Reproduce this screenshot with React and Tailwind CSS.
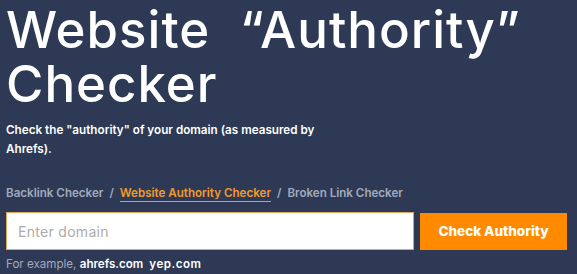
export default function App() {
  return (
    <div className="w-[577px] h-[274px] bg-[#2e3a55] overflow-hidden px-[6px]" style={{ fontFamily: "Inter, 'Noto Sans', sans-serif" }}>
      <h1 className="text-white text-[51px] leading-[54px] font-medium pt-[3px] tracking-[1px] [word-spacing:15px]">
        Website “Authority” Checker
      </h1>
      <p className="text-white text-[11.7px] leading-[19px] font-semibold mt-[10px] max-w-[320px]">
        Check the "authority" of your domain (as measured by Ahrefs).
      </p>
      <div className="mt-[26px] text-[11.6px] font-semibold text-[#a3abbb] flex gap-[6px] leading-[16px]">
        <span>Backlink Checker</span>
        <span>/</span>
        <span className="text-[#f29a2e] border-b border-[#f29a2e]">Website Authority Checker</span>
        <span>/</span>
        <span>Broken Link Checker</span>
      </div>
      <div className="mt-[10px] flex items-start gap-[6px]">
        <input
          className="w-[408px] h-[38px] bg-white border border-[#e3a55c] px-[11px] text-[14px] text-gray-800 placeholder:text-[#acacac] outline-none tracking-[0.3px]"
          placeholder="Enter domain"
        />
        <button className="w-[147px] h-[37px] mt-[1px] bg-[#ff8a00] text-white text-[13.5px] font-extrabold">
          Check Authority
        </button>
      </div>
      <div className="mt-[6px] text-[11.6px] leading-[16px]">
        <span className="text-[#a3abbb]">For example, </span>
        <span className="text-white font-semibold">ahrefs.com</span>
        <span className="text-white font-semibold ml-[6px] tracking-[0.5px]">yep.com</span>
      </div>
    </div>
  );
}
